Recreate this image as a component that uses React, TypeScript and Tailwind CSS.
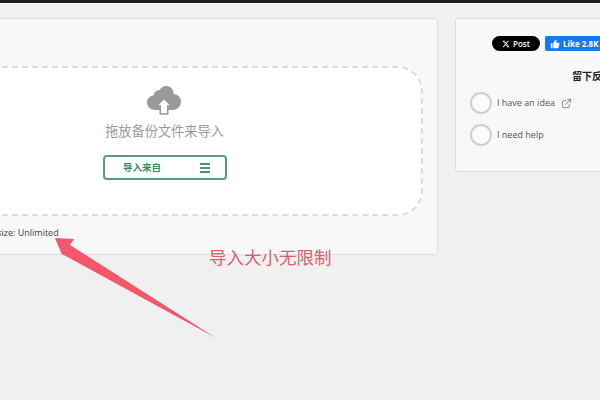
import { ExternalLink } from "lucide-react";

const cjk = { fontFamily: '"Noto Sans CJK SC", "Liberation Sans", sans-serif' };

export default function App() {
  return (
    <div className="relative h-[400px] w-[600px] overflow-hidden bg-[#f0f0f0] font-['Open_Sans','Noto_Sans_CJK_SC',sans-serif]">
      <div className="h-[3px] bg-[#1c1c1c]" />
      <div className="h-px bg-white" />
      <div className="flex items-start gap-[17px] pl-0 pt-[14px]">
        <div className="ml-[-110px] flex h-[237px] w-[548px] shrink-0 flex-col rounded-[3px] border border-[#dedede] bg-[#f8f8f8] pl-[16px] pr-[14px] pt-[47px]">
          <div className="flex h-[150px] flex-col items-center rounded-[25px] border-2 border-dashed border-[#dcdcdc] bg-white pt-[17px]">
            <svg viewBox="0 0 36 30" className="ml-[-2px] h-[30px] w-[36px]">
              <path
                fill="#999999"
                d="M10 25C4.500 25 1 22 1 17.500 1 13.500 3.800 10.800 7.500 10.400 8.500 6.500 10.800 5 13.500 5.200 15 2.200 17.500 1 20 1c4 0 6.800 2.600 7.500 6.500 0 .6 0 1 0 1.400 4.500.4 7.500 3.400 7.500 7.600 0 4.600-3.500 8.500-8 8.500z"
              />
              <path fill="#ffffff" stroke="#999999" strokeWidth="1.500" d="M18 13.500l7.500 7.500h-3.800v8h-7.400v-8h-3.800z" />
            </svg>
            <div style={cjk} className="ml-[-1px] mt-[6px] h-[20px] text-[13.2px] leading-[20px] text-[#9a9a9a]">
              拖放备份文件来导入
            </div>
            <div className="mt-[14px] flex h-[25px] w-[124px] items-center justify-between rounded-[4px] border-2 border-[#5c9c79] bg-white pl-[18px] pr-[15px]">
              <span style={cjk} className="text-[9.5px] font-bold leading-none text-[#3b8a60]">
                导入来自
              </span>
              <span className="flex w-[10px] flex-col gap-[2px]">
                <span className="h-[2px] bg-[#4f9470]" />
                <span className="h-[2px] bg-[#4f9470]" />
                <span className="h-[2px] bg-[#4f9470]" />
              </span>
            </div>
          </div>
          <div className="mt-[10px] ml-[70px] text-[9px] leading-[14px] text-[#444]">Max size: Unlimited</div>
        </div>

        <div className="ml-0 flex h-[154px] w-[200px] shrink-0 flex-col rounded-[3px] border border-[#dedede] bg-[#f8f8f8] pl-[14px] pt-[17px]">
          <div className="ml-[22px] flex items-center gap-[5px]">
            <div className="flex h-[15px] w-[48px] items-center justify-center gap-[3px] rounded-full bg-black text-[8px] font-semibold leading-none text-white">
              <svg viewBox="0 0 24 24" className="h-[8px] w-[8px]" fill="#ffffff">
                <path d="M18.200 2.300h3.300l-7.200 8.200L22.800 21.800h-6.700l-5.200-6.800-6 6.800H1.600l7.700-8.800L1.200 2.300H8l4.700 6.200zm-1.200 17.500h1.800L7.100 4.200H5.100z" />
              </svg>
              Post
            </div>
            <div className="flex h-[15px] w-[60px] items-center gap-[3px] rounded-[2px] bg-[#1877f2] pl-[5px] text-[8px] font-bold leading-none text-white">
              <svg viewBox="0 0 24 24" className="h-[10px] w-[10px]" fill="#ffffff">
                <path d="M2 10h4v12H2zM8 22V10l5-8c2 0 3 1.500 2.600 3.500L15 9h6c1 0 1.800 1 1.600 2l-1.800 9c-.2 1.200-1 2-2.300 2z" />
              </svg>
              Like 2.8K
            </div>
          </div>
          <div style={cjk} className="mt-[17px] ml-[102px] whitespace-nowrap text-[10px] font-bold leading-[15px] text-[#222]">
            留下反馈
          </div>
          <div className="mt-[9px] flex h-[22px] items-center">
            <span className="h-[22px] w-[22px] rounded-full border-2 border-[#cfcfcf] bg-[#fafafa]" />
            <span className="ml-[5px] text-[9px] text-[#555]">I have an idea</span>
            <ExternalLink size={11} strokeWidth={1.5} className="ml-[6px] text-[#555]" />
          </div>
          <div className="mt-[10px] flex h-[22px] items-center">
            <span className="h-[22px] w-[22px] rounded-full border-2 border-[#cfcfcf] bg-[#fafafa]" />
            <span className="ml-[5px] text-[9px] text-[#555]">I need help</span>
          </div>
        </div>
      </div>

      <svg viewBox="0 0 600 400" className="pointer-events-none absolute left-0 top-0 h-[400px] w-[600px]">
        <path fill="#f4566c" d="M55 238L74 239 70 245 216 338 62 254 63 257z" />
      </svg>
      <div style={cjk} className="absolute left-[209px] top-[246px] text-[17.5px] leading-[22px] text-[#d9606f]">
        导入大小无限制
      </div>
    </div>
  );
}
